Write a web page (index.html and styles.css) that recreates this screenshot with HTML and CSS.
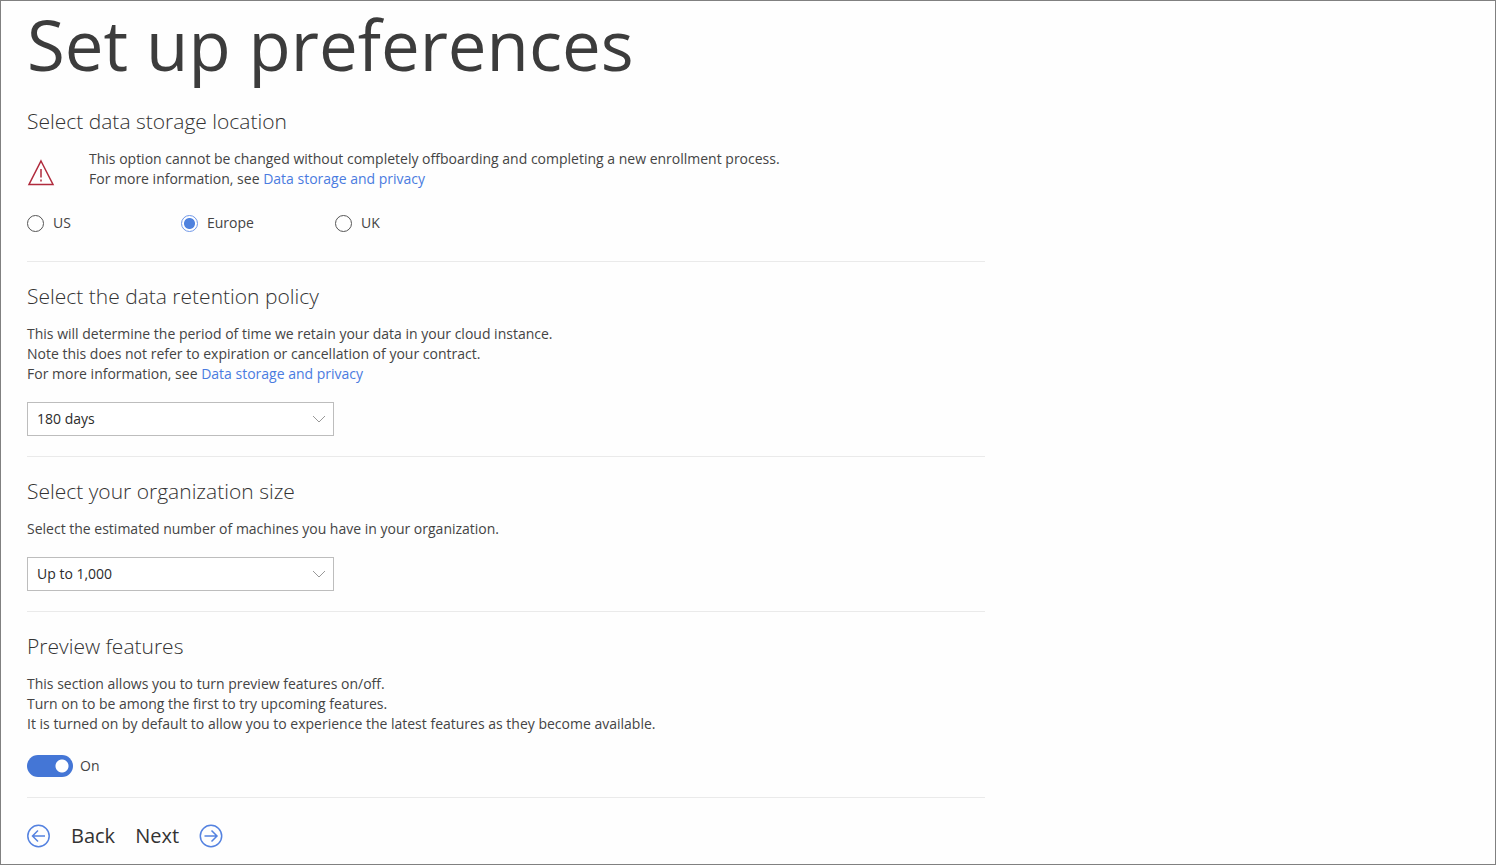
FILE: index.html
```html
<!DOCTYPE html>
<html lang="en">
<head>
<meta charset="utf-8">
<meta name="viewport" content="width=device-width, initial-scale=1">
<title>Set up preferences</title>
<link rel="stylesheet" href="styles.css">
</head>
<body>
<main class="page">
  <h1 class="title">Set up preferences</h1>
  <form class="form">
    <section class="section section-first">
      <h2 class="heading" id="location">Select data storage location</h2>
      <div class="notice">
        <svg class="warning" viewBox="0 0 28 28" aria-hidden="true"><path d="M14 3 26 26.500H2Z"/><path d="M14 11v8.500M14 21.500v2"/></svg>
        <p class="text">This option cannot be changed without completely offboarding and completing a new enrollment process.<br>For more information, see <a class="link" href="#">Data storage and privacy</a></p>
      </div>
      <div class="radios" role="radiogroup" aria-labelledby="location">
        <label class="radio"><input class="radio-input" type="radio" name="location">US</label>
        <label class="radio"><input class="radio-input" type="radio" name="location" checked>Europe</label>
        <label class="radio"><input class="radio-input" type="radio" name="location">UK</label>
      </div>
    </section>
    <section class="section">
      <h2 class="heading"><label for="retention">Select the data retention policy</label></h2>
      <p class="text">This will determine the period of time we retain your data in your cloud instance.<br>Note this does not refer to expiration or cancellation of your contract.<br>For more information, see <a class="link" href="#">Data storage and privacy</a></p>
      <div class="picker">
        <select class="select" id="retention"><option>180 days</option></select>
        <svg class="chevron" viewBox="0 0 14 8" aria-hidden="true"><path d="M1 1l6 6 6-6"/></svg>
      </div>
    </section>
    <section class="section">
      <h2 class="heading"><label for="size">Select your organization size</label></h2>
      <p class="text">Select the estimated number of machines you have in your organization.</p>
      <div class="picker">
        <select class="select" id="size"><option>Up to 1,000</option></select>
        <svg class="chevron" viewBox="0 0 14 8" aria-hidden="true"><path d="M1 1l6 6 6-6"/></svg>
      </div>
    </section>
    <section class="section">
      <h2 class="heading">Preview features</h2>
      <p class="text">This section allows you to turn preview features on/off.<br>Turn on to be among the first to try upcoming features.<br>It is turned on by default to allow you to experience the latest features as they become available.</p>
      <label class="switch"><input class="toggle" type="checkbox" role="switch" checked>On</label>
    </section>
    <div class="actions">
      <button class="action" type="button">
        <svg class="arrow" viewBox="0 0 24 24" aria-hidden="true"><circle cx="11.500" cy="12" r="10.700"/><path d="M18 12H5.500M11 6.500 5.500 12l5.500 5.500"/></svg>
        Back
      </button>
      <button class="action" type="button">
        Next
        <svg class="arrow" viewBox="0 0 24 24" aria-hidden="true"><circle cx="12" cy="12" r="10.700"/><path d="M5.500 12H18M12.500 6.500 18 12l-5.500 5.500"/></svg>
      </button>
    </div>
  </form>
</main>
</body>
</html>
```
FILE: styles.css
```css
* { box-sizing: border-box; }

body {
  margin: 0;
  background: #fefefe;
  color: #444;
  font: 14px/20px "Open Sans", "Noto Sans", sans-serif;
}

.page {
  min-height: 100vh;
  padding: 0 26px;
  border: 1px solid #808080;
}

.title {
  margin: 0 0 6px;
  font-size: 69px;
  font-weight: 400;
  line-height: 86px;
  color: #3c3c3c;
}

.form { max-width: 958px; }

.section {
  padding: 20px 0;
  border-bottom: 1px solid #eaeaea;
}

.section-first {
  padding-top: 14px;
  padding-bottom: 28px;
}

.heading {
  margin: 0 0 14px;
  font-size: 21px;
  font-weight: 300;
  line-height: 28px;
  color: #333;
}

.text { margin: 0; }

.link {
  color: #4a7be0;
  text-decoration: none;
}

.notice {
  display: flex;
  align-items: flex-start;
  gap: 34px;
}

.warning {
  flex: none;
  width: 28px;
  height: 28px;
  margin-top: 9px;
  fill: none;
  stroke: #b02a3c;
  stroke-width: 1.5;
}

.radios {
  display: grid;
  grid-template-columns: repeat(3, 154px);
  margin-top: 24px;
}

.radio {
  display: flex;
  align-items: center;
  gap: 9px;
}

.radio-input {
  appearance: none;
  flex: none;
  width: 17px;
  height: 17px;
  margin: 0;
  border: 1px solid #555;
  border-radius: 50%;
  background: #fff;
}

.radio-input:checked {
  border-color: #6f97e8;
  background: radial-gradient(circle, #4f82de 5px, #fff 6px);
}

.picker {
  position: relative;
  max-width: 307px;
  margin-top: 18px;
}

.select {
  appearance: none;
  display: block;
  width: 100%;
  height: 34px;
  padding: 0 32px 0 9px;
  border: 1px solid #bdbdbd;
  border-radius: 0;
  background: #fff;
  color: #2b2b2b;
  font: inherit;
}

.chevron {
  position: absolute;
  top: 13px;
  right: 8px;
  width: 14px;
  height: 8px;
  fill: none;
  stroke: #999;
  pointer-events: none;
}

.switch {
  display: flex;
  align-items: center;
  gap: 7px;
  width: max-content;
  margin-top: 21px;
}

.toggle {
  appearance: none;
  width: 46px;
  height: 22px;
  margin: 0;
  border-radius: 11px;
  background: #ccc radial-gradient(circle at 11px 50%, #fff 6px, transparent 7px);
}

.toggle:checked {
  background: #4476d6 radial-gradient(circle at 35px 50%, #fff 6px, transparent 7px);
}

.actions {
  display: flex;
  gap: 20px;
  padding-top: 24px;
}

.action {
  display: flex;
  align-items: center;
  gap: 20px;
  padding: 0;
  border: 0;
  background: none;
  color: #333;
  font: 20px/28px "Open Sans", "Noto Sans", sans-serif;
}

.arrow {
  width: 24px;
  height: 24px;
  fill: none;
  stroke: #5482e0;
  stroke-width: 1.5;
}
```
